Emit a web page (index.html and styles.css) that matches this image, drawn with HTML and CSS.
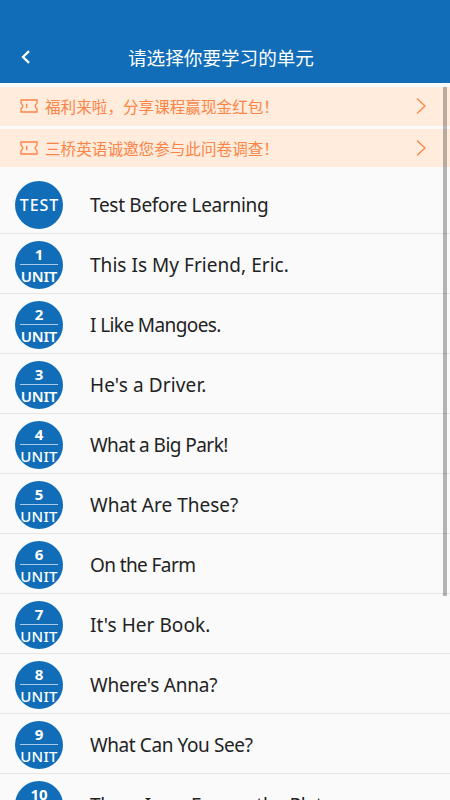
FILE: index.html
```html
<!DOCTYPE html>
<html lang="zh-CN">
<head>
<meta charset="utf-8">
<title>请选择你要学习的单元</title>
<link rel="stylesheet" href="styles.css">
</head>
<body>
<div class="app">
  <header class="header">
    <svg class="back" viewBox="0 0 10 12"><path d="M7.6 1 2.4 6l5.2 5"/></svg>
    <h1>请选择你要学习的单元</h1>
  </header>
  <main class="content">
    <a class="banner">
      <svg class="ticket" viewBox="0 0 18 14"><path d="M1 1H17V4.2Q13.4 7 17 9.8V13H1V9.8Q4.6 7 1 4.2ZM6.7 4.7V9.3"/></svg>
      <span>福利来啦，分享课程赢现金红包！</span>
      <svg class="arrow" viewBox="0 0 10 16"><path d="M1 .5 9 8 1 15.5"/></svg>
    </a>
    <a class="banner">
      <svg class="ticket" viewBox="0 0 18 14"><path d="M1 1H17V4.2Q13.4 7 17 9.8V13H1V9.8Q4.6 7 1 4.2ZM6.7 4.7V9.3"/></svg>
      <span>三桥英语诚邀您参与此问卷调查！</span>
      <svg class="arrow" viewBox="0 0 10 16"><path d="M1 .5 9 8 1 15.5"/></svg>
    </a>
    <ul class="units">
      <li><div class="badge test">TEST</div><span class="title">Test Before Learning</span></li>
      <li><div class="badge"><b>1</b><strong>UNIT</strong></div><span class="title">This Is My Friend, Eric.</span></li>
      <li><div class="badge"><b>2</b><strong>UNIT</strong></div><span class="title">I Like Mangoes.</span></li>
      <li><div class="badge"><b>3</b><strong>UNIT</strong></div><span class="title">He's a Driver.</span></li>
      <li><div class="badge"><b>4</b><span>UNIT</span></div><span class="title">What a Big Park!</span></li>
      <li><div class="badge"><b>5</b><span>UNIT</span></div><span class="title">What Are These?</span></li>
      <li><div class="badge"><b>6</b><span>UNIT</span></div><span class="title">On the Farm</span></li>
      <li><div class="badge"><b>7</b><span>UNIT</span></div><span class="title">It's Her Book.</span></li>
      <li><div class="badge"><b>8</b><span>UNIT</span></div><span class="title">Where's Anna?</span></li>
      <li><div class="badge"><b>9</b><span>UNIT</span></div><span class="title">What Can You See?</span></li>
      <li><div class="badge"><b>10</b><span>UNIT</span></div><span class="title">There Is an Egg on the Plate.</span></li>
    </ul>
  </main>
  <div class="scrollbar"></div>
</div>
</body>
</html>
```
FILE: styles.css
```css
* { box-sizing: border-box; }
body { margin: 0; background: #fafafa; font-family: "Noto Sans CJK SC", sans-serif; }
.app { position: relative; height: 800px; overflow: hidden; }
.header { height: 83px; padding: 31px 28px 0 20px; background: #116db8; color: #fff; display: grid; grid-template-columns: 12px 1fr 12px; align-items: center; }
.back { width: 12px; height: 14px; fill: none; stroke: #fff; stroke-width: 1.9; }
h1 { margin: 0; font-size: 18.6px; line-height: 52px; font-weight: 400; text-align: center; white-space: nowrap; }
.content { padding-top: 4px; }
.banner { height: 39px; margin-bottom: 3px; padding: 0 24px 1px 20px; background: #ffecdc; color: #fb8446; display: flex; align-items: center; font-size: 15.6px; }
.banner + .banner { height: 38px; margin-bottom: 0; padding-bottom: 0; }
.banner span { flex: 1; margin-left: 7px; white-space: nowrap; }
.ticket { width: 18px; height: 14px; fill: none; stroke: #fb8446; stroke-width: 1.3; }
.arrow { width: 10px; height: 16px; fill: none; stroke: #fb8446; stroke-width: 1.3; }
.units { list-style: none; margin: 0; padding: 7px 0 0; }
.units li { height: 60px; padding: 2px 15px 0; border-bottom: 1px solid #e5e5e5; display: flex; align-items: center; font-family: "Comic Sans MS", "Noto Sans", sans-serif; }
.badge { width: 48px; height: 48px; border-radius: 50%; background: #116db8; color: #fff; display: flex; flex-direction: column; align-items: center; font-size: 16px; line-height: 20px; flex: none; }
.badge b { width: 38px; height: 24px; padding-top: 2px; border-bottom: 1px solid #a5c9e6; font-size: 15px; line-height: 22px; text-align: center; }
.badge strong, .badge span { line-height: 23px; font-size: 15px; }
.badge strong { font-weight: 600; letter-spacing: -.2px; }
.badge span { font-weight: 500; letter-spacing: .3px; }
.badge.test { justify-content: center; letter-spacing: 1px; padding-left: 1px; font-weight: 500; }
.title { margin-left: 27px; font-size: 19px; color: #222; white-space: nowrap; }
.units li:nth-child(1) .title { letter-spacing: -.3px; }
.units li:nth-child(2) .title { letter-spacing: .04px; }
.units li:nth-child(3) .title { letter-spacing: -.6px; }
.units li:nth-child(4) .title { letter-spacing: .12px; }
.units li:nth-child(5) .title { letter-spacing: -.55px; }
.units li:nth-child(7) .title { letter-spacing: -.6px; }
.units li:nth-child(8) .title { letter-spacing: .05px; }
.units li:nth-child(9) .title { letter-spacing: -.25px; }
.units li:nth-child(10) .title { letter-spacing: -.4px; }
.units li:nth-child(11) .title { letter-spacing: -.25px; }
.scrollbar { position: absolute; right: 3px; top: 87px; width: 4px; height: 509px; background: rgba(0, 0, 0, .28); }
```
